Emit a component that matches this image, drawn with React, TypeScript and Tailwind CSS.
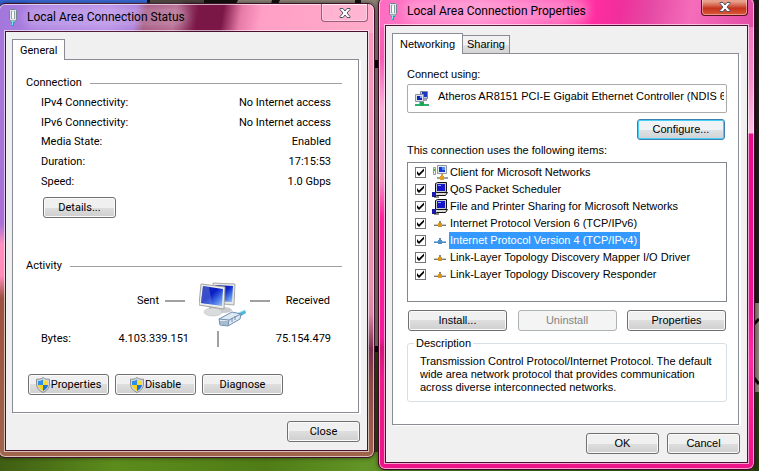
import { useState } from "react";
import type { ReactNode } from "react";

const tahoma = "font-['Roboto',sans-serif] text-[11px]";
const sans = "font-['Liberation_Sans',sans-serif] text-[11px]";

function Wallpaper() {
  return (
    <svg className="absolute inset-0 h-full w-full" viewBox="0 0 759 471" preserveAspectRatio="xMidYMid slice" aria-hidden="true">
      <defs>
        <linearGradient id="grass" x1="0" y1="0" x2="1" y2="0">
          <stop offset="0" stopColor="#3f5e13" />
          <stop offset=".15" stopColor="#5c8c1c" />
          <stop offset=".35" stopColor="#4f7c16" />
          <stop offset=".48" stopColor="#629426" />
          <stop offset="1" stopColor="#2f4a10" />
        </linearGradient>
      </defs>
      <rect width="759" height="471" fill="#8d8376" />
      <rect width="148" height="12" fill="#3565d6" />
      <rect x="148" width="62" height="12" fill="#4d443c" />
      <rect x="147" width="3" height="12" fill="#0a0a10" />
      <path d="M204 0h34l-4 8h-30zM272 0h8l-4 8h-6zM355 0h6v8h-6z" fill="#14100e" />
      <rect x="374" y="60" width="6" height="8" fill="#050505" />
      <rect x="374" y="346" width="6" height="6" fill="#050505" />
      <rect x="374" y="352" width="6" height="119" fill="#33490f" />
      <rect y="452" width="759" height="20" fill="url(#grass)" />
      <rect x="754" width="5" height="303" fill="#1d1917" />
      <path d="M754 324l5-5M754 378l5 6" stroke="#080706" strokeWidth="3" />
      <rect x="754" y="392" width="5" height="80" fill="#26390d" />
    </svg>
  );
}

function PlugIcon() {
  return (
    <svg width="10" height="17" viewBox="0 0 10 17" aria-hidden="true">
      <path d="M2.500 .5h5l1 1v9l-1.500 2h-4l-1.500-2v-9z" fill="#dfe7ea" stroke="#71848e" />
      <path d="M3.500 2v8M6.500 2v8" stroke="#8e9ea7" />
      <path d="M4 3h2v6H4z" fill="#fff" />
      <path d="M3 11h4v2H3z" fill="#9eb0b8" />
      <path d="M3 13h4v1H3zM4 14h2v3H4z" fill="#16a5b8" />
      <path d="M4 12h1v4H4z" fill="#7fe9ee" />
    </svg>
  );
}

function ShieldIcon() {
  return (
    <svg width="14" height="16" viewBox="0 0 14 16" aria-hidden="true">
      <path d="M7 .5L8.500 1.500Q10.500 2.500 13.500 2.200V7Q13.500 12.500 7 15.500Q.5 12.500 .5 7V2.200Q3.500 2.500 5.500 1.500z" fill="#d7dadd" stroke="#8a8f95" />
      <path d="M7 2.500Q4.500 4 2 4V8h5z" fill="#2f8fe6" />
      <path d="M7 2.500Q9.500 4 12 4V8H7z" fill="#f9dc3a" />
      <path d="M2 8h5v6Q2.400 11.500 2 8z" fill="#f7d323" />
      <path d="M12 8H7v6Q11.600 11.500 12 8z" fill="#1f74d4" />
    </svg>
  );
}

function ComputersIcon() {
  return (
    <svg width="48" height="46" viewBox="0 0 48 46" aria-hidden="true">
      <defs>
        <linearGradient id="screen" x1="0" y1="0" x2="1" y2="1">
          <stop offset="0" stopColor="#1526a8" />
          <stop offset=".45" stopColor="#0c1fc4" />
          <stop offset=".65" stopColor="#3560e0" />
          <stop offset="1" stopColor="#9cc8fb" />
        </linearGradient>
      </defs>
      <ellipse cx="25" cy="28" rx="8" ry="3" fill="#c9cbce" />
      <path d="M14 1L36 2L35 23L14 21z" fill="#e6e7e3" stroke="#a9aaa7" />
      <path d="M16 3L34 4L33 20L16 19z" fill="url(#screen)" />
      <path d="M10 24l7 1 1 4h-8z" fill="#b5b8bb" />
      <ellipse cx="14" cy="30" rx="9" ry="4" fill="#d9dbdd" stroke="#b3b6b9" strokeWidth=".5" />
      <path d="M2 2L26 5L25 27L0 23z" fill="#efefeb" stroke="#a3a4a1" />
      <path d="M4 4L24 7L23 24L2 21z" fill="url(#screen)" />
      <path d="M4 4L10 5L13 22L2 21z" fill="#6f86dc" opacity=".45" />
      <path d="M35 33L46 28L47 31L37 37z" fill="#48b9dc" />
      <path d="M37 32L46 28" stroke="#a5e4f4" />
      <path d="M20 37L33 30L42 32L41 37L29 44L21 43z" fill="#dfe9f4" stroke="#6f8dae" />
      <path d="M20 37l10 1 12-6M30 38l-1 6M22 39v3M24 39v4M26 39v4M28 39v4M33 36v4M36 34v4" fill="none" stroke="#6f8dae" />
    </svg>
  );
}

function AdapterIcon() {
  return (
    <svg width="16" height="17" viewBox="0 0 16 17" aria-hidden="true">
      <path d="M6.500 1.500h7v7h-7z" fill="#c8cdda" stroke="#7d8499" />
      <path d="M8 2h5v5H8z" fill="#1b35c4" />
      <path d="M1.500 4.500h8v7h-8z" fill="#dde1ea" stroke="#8d93a5" />
      <path d="M3 6h5v4H3z" fill="#1226b0" />
      <path d="M6 6h2v2H6z" fill="#7fa4f2" />
      <path d="M10 8l3 1v2h-3z" fill="#9ba1b3" />
      <path d="M5 12h5v2H5z" fill="#aab0bd" />
      <path d="M1 14h14v2H1z" fill="#2fae6c" />
      <path d="M6 12h4v4H6z" fill="#19a75c" />
    </svg>
  );
}

type ItemKind = "client" | "service" | "protocol";

function ItemIcon({ kind, active }: { kind: ItemKind; active?: boolean }) {
  if (kind === "client")
    return (
      <svg width="16" height="16" viewBox="0 0 16 16" aria-hidden="true">
        <path d="M1.500 2.500h2v7h-2z" fill="#eee" stroke="#999" />
        <path d="M2 4h1v2H2z" fill="#4db33d" />
        <path d="M5.500 .5h9v8h-9z" fill="#e6eaf0" stroke="#9097a3" />
        <path d="M7 2h6v5H7z" fill="#163ad0" />
        <path d="M10 2h3v3h-3z" fill="#5d8ef2" />
        <path d="M9 9h2v3H9z" fill="#caa03a" />
        <path d="M5 13h11" stroke="#a0a0a0" strokeWidth="2" />
        <path d="M8 11h4v4H8z" fill="#e0a020" />
      </svg>
    );
  if (kind === "service")
    return (
      <svg width="16" height="16" viewBox="0 0 16 16" aria-hidden="true">
        <path d="M3.500 1.500l2-1h9v9l-2 1.500h-9z" fill="#c9c9d6" stroke="#111" />
        <path d="M5 2h8v7H5z" fill="#1616c8" />
        <path d="M6 3h3v1H6z" fill="#8ea2ff" />
        <path d="M2.500 12.500l2-2h11l-2 3h-9z" fill="#dadada" stroke="#111" />
        <path d="M0 10h4v5H0z" fill="#1a1aa8" />
        <path d="M2 15h5" stroke="#111" />
      </svg>
    );
  return (
    <svg width="16" height="16" viewBox="0 0 16 16" aria-hidden="true">
      <path d="M2 9.500h12" stroke={active ? "#4f86bd" : "#777"} />
      <path d="M2 8.500h12" stroke={active ? "#8fc0ea" : "#c8c8c8"} />
      <path d="M7 5h2v2H7z" fill={active ? "#5a8fc0" : "#94886a"} />
      <path d="M6 7h4v4H6z" fill={active ? "#4c8fc4" : "#d9981c"} />
    </svg>
  );
}

function CloseGlyph() {
  return (
    <svg width="12" height="10" viewBox="0 0 12 10" aria-hidden="true">
      <path d="M1 .5h3L6 3L8 .5h3v1L8 5l3 3.500v1H8L6 7L4 9.500H1v-1L4 5L1 1.500z" fill="#fff" stroke="#4f5566" />
    </svg>
  );
}

function Btn({ children, className, disabled, focused }: { children: ReactNode; className: string; disabled?: boolean; focused?: boolean }) {
  const look = disabled
    ? "border-[#adb2b5] bg-[#f4f4f4] text-[#838383]"
    : focused
      ? "border-[#3c7fb1] bg-linear-to-b from-[#f0f3f5] from-50% via-[#dfe2e4] via-50% to-[#cfd3d6] text-black shadow-[inset_0_0_0_1px_#46d0f5]"
      : "border-[#707070] bg-linear-to-b from-[#f0f0f0] from-50% via-[#dedede] via-50% to-[#cfcfcf] text-black shadow-[inset_0_0_0_1px_#fafafa]";
  return (
    <button type="button" disabled={disabled} className={`flex h-[21px] items-center justify-center rounded-[3px] border leading-none whitespace-nowrap ${look} ${className}`}>
      {children}
    </button>
  );
}

function Window({ title, className, glass, titleGlow, closeLook, children }: { title: string; className: string; glass: string; titleGlow: string; closeLook: string; children: ReactNode }) {
  return (
    <section aria-label={title} className={`absolute w-[377px] rounded-[7px] border px-[5px] pb-[5px] shadow-[inset_0_0_0_1px_#ffffff99,0_0_4px_#0008] ${className} ${glass}`}>
      <header className="flex h-[26px] items-start justify-between pl-1">
        <div className="flex h-[26px] items-center gap-[9px]">
          <PlugIcon />
          <h1 className={`rounded-full font-['Roboto',sans-serif] text-[12px] leading-4 whitespace-nowrap text-black ${titleGlow}`}>{title}</h1>
        </div>
        <button type="button" aria-label="Close" className={`mr-px flex h-[18px] w-[47px] items-center justify-center rounded-b-[4px] border border-t-0 ${closeLook}`}>
          <CloseGlyph />
        </button>
      </header>
      <div className="border border-white/60">
        <div className="border border-[#4a1030] bg-[#f0f0f0]">{children}</div>
      </div>
    </section>
  );
}

function Tab({ label, active, onClick }: { label: string; active: boolean; onClick?: () => void }) {
  return (
    <button
      type="button"
      role="tab"
      aria-selected={active}
      onClick={onClick}
      className={
        active
          ? "z-10 -mb-px h-[21px] border border-b-0 border-[#898c95] bg-white px-[7px] leading-none"
          : "h-[18px] border border-b-0 border-l-0 border-[#898c95] bg-linear-to-b from-[#f2f2f2] from-50% via-[#e2e2e2] via-50% to-[#d4d4d4] px-1 leading-none"
      }
    >
      {label}
    </button>
  );
}

function Heading({ children }: { children: ReactNode }) {
  return (
    <h2 className="flex h-4 items-center gap-2 whitespace-nowrap">
      {children}
      <span className="h-px flex-1 bg-[#a0a0a0]" />
    </h2>
  );
}

const status = [
  ["IPv4 Connectivity:", "No Internet access"],
  ["IPv6 Connectivity:", "No Internet access"],
  ["Media State:", "Enabled"],
  ["Duration:", "17:15:53"],
  ["Speed:", "1.0 Gbps"],
];

function StatusWindow() {
  return (
    <Window
      title="Local Area Connection Status"
      className="top-[3px] left-[-2px] border-[#3c1428]"
      glass="[background:linear-gradient(100deg,#a376dc_0,#b48ae6_110px,#a878dc_136px,#a0507c_146px,#b0628a_175px,#7a1747_198px,#7a1747_222px,#e67aa6_240px,#ff9fc6_260px,#ffabc9_370px)_top/100%_29px_no-repeat,linear-gradient(#a878dc_0,#a86fd6_220px,#ff8fc0_240px,#ff8ab8_272px,#9c5040_294px,#a0644c_100%)_left/50%_100%_no-repeat,linear-gradient(#f79cc0_0,#e792b2_280px,#d986a8_310px,#7b2f50_345px,#8a4c44_380px,#a0644c_100%)]"
      titleGlow="bg-white/20 shadow-[0_0_8px_4px_#ffffff33]"
      closeLook="border-[#9c5b78] bg-white/15 shadow-[inset_0_0_0_1px_#ffffff55]"
    >
      <div className={`pt-[7px] pr-[7px] pb-2 pl-[6px] text-black ${tahoma}`}>
        <div role="tablist" className="flex h-5 items-end">
          <Tab label="General" active />
        </div>
        <div role="tabpanel" className="mr-px border border-[#898c95] bg-white px-[13px] pt-[15px] pb-[17px] shadow-[2px_1px_0_#fff]">
          <div className="pr-[3px]">
            <Heading>Connection</Heading>
          </div>
          <dl className="mt-[2px] grid h-[98px] grid-rows-5 pr-[14px] pl-[15px]">
            {status.map(([name, value]) => (
              <div key={name} className="flex items-center justify-between leading-none">
                <dt>{name}</dt>
                <dd>{value}</dd>
              </div>
            ))}
          </dl>
          <Btn className="mt-[6px] ml-[17px] w-[73px]">Details...</Btn>
          <div className="mt-10 pr-[3px]">
            <Heading>Activity</Heading>
          </div>
          <div className="mt-2 flex h-[46px] items-center pr-[15px] pl-[15px]">
            <span className="w-[118px] shrink-0 pb-2 text-right">Sent</span>
            <span className="mb-[9px] ml-[6px] h-[2px] w-5 shrink-0 bg-[#a0a0a0]" />
            <span className="mr-[3px] ml-[14px] shrink-0">
              <ComputersIcon />
            </span>
            <span className="mb-[9px] h-[2px] w-5 shrink-0 bg-[#a0a0a0]" />
            <span className="flex-1 pb-2 text-right">Received</span>
          </div>
          <div className="mt-[3px] flex h-4 items-center pr-[14px] pl-[15px]">
            <span className="w-[60px]">Bytes:</span>
            <span className="w-[88px] text-right">4.103.339.151</span>
            <span className="ml-7 h-4 w-[2px] bg-[#a0a0a0]" />
            <span className="flex-1 text-right">75.154.479</span>
          </div>
          <div className="mt-[27px] flex gap-[6px] pl-[2px]">
            <Btn className="w-[81px] gap-px">
              <ShieldIcon />
              Properties
            </Btn>
            <Btn className="w-[81px] gap-px">
              <ShieldIcon />
              Disable
            </Btn>
            <Btn className="w-[81px]">Diagnose</Btn>
          </div>
        </div>
        <div className="mt-2 flex justify-end">
          <Btn className="w-[73px]">Close</Btn>
        </div>
      </div>
    </Window>
  );
}

const items: { label: string; kind: ItemKind }[] = [
  { label: "Client for Microsoft Networks", kind: "client" },
  { label: "QoS Packet Scheduler", kind: "service" },
  { label: "File and Printer Sharing for Microsoft Networks", kind: "service" },
  { label: "Internet Protocol Version 6 (TCP/IPv6)", kind: "protocol" },
  { label: "Internet Protocol Version 4 (TCP/IPv4)", kind: "protocol" },
  { label: "Link-Layer Topology Discovery Mapper I/O Driver", kind: "protocol" },
  { label: "Link-Layer Topology Discovery Responder", kind: "protocol" },
];

function ItemRow({ label, kind, selected }: { label: string; kind: ItemKind; selected: boolean }) {
  const [checked, setChecked] = useState(true);
  return (
    <li>
      <label className="flex h-[17px] items-center">
        <span className="relative flex">
          <input type="checkbox" checked={checked} onChange={(e) => setChecked(e.target.checked)} className="h-[11px] w-[11px] appearance-none border border-[#70757c] bg-white" />
          {checked && (
            <svg className="pointer-events-none absolute inset-0" width="11" height="11" viewBox="0 0 11 11" aria-hidden="true">
              <path d="M2 4v3l2 2l5-5V1.500L4 6.500z" fill="#000" />
            </svg>
          )}
        </span>
        <span className="mr-px ml-[6px]">
          <ItemIcon kind={kind} active={selected} />
        </span>
        <span className={`h-[17px] pr-[3px] pl-px leading-[17px] whitespace-nowrap ${selected ? "bg-[#3399ff] text-white" : ""}`}>{label}</span>
      </label>
    </li>
  );
}

function PropertiesWindow() {
  return (
    <Window
      title="Local Area Connection Properties"
      className="top-[-3px] left-[378px] border-[#3c0824]"
      glass="[background:linear-gradient(100deg,#ff6cc0_0,#ff86cc_100px,#ff5cb8_180px,#ff2da0_215px,#f02f9c_240px,#e54aa4_270px,#f56dba_310px,#e04aa4_377px)_top/100%_29px_no-repeat,linear-gradient(#ff6cc0_0,#f45cb4_60px,#fbb0da_110px,#f59ccc_180px,#ff1f9c_220px,#f5189a_340px,#d01478_350px,#f01a8c_380px,#ec1488_100%)_left/50%_100%_no-repeat,linear-gradient(#f06cba_0,#f58cc8_80px,#fbc0e0_135px,#e60f8c_136px,#ec1490_310px,#ff2ba4_360px,#ec1488_100%)]"
      titleGlow="bg-white/20 shadow-[0_0_8px_4px_#ffffff33]"
      closeLook="border-[#5c1020] bg-linear-to-b from-[#e8a08c] from-20% via-[#c4321c] via-60% to-[#dc5a3c] shadow-[inset_0_0_0_1px_#ffffff66]"
    >
      <div className={`pt-[7px] pr-[7px] pb-2 pl-[6px] text-black ${sans}`}>
        <div role="tablist" className="flex h-5 items-end">
          <Tab label="Networking" active />
          <Tab label="Sharing" active={false} />
        </div>
        <div role="tabpanel" className="mr-px border border-[#898c95] bg-white pt-3 pr-[11px] pb-[22px] pl-[14px] shadow-[2px_1px_0_#fff]">
          <label htmlFor="adapter" className="block h-4 leading-4">
            Connect using:
          </label>
          <div className="mt-[2px] flex h-[29px] items-center rounded-[2px] border border-[#ababab] pr-[2px] pl-[6px]">
            <AdapterIcon />
            <input id="adapter" readOnly value="Atheros AR8151 PCI-E Gigabit Ethernet Controller (NDIS 6" className="mb-[5px] ml-2 h-4 min-w-0 flex-1 bg-transparent outline-none" />
          </div>
          <div className="mt-[6px] flex justify-end pr-[2px]">
            <Btn focused className="w-[88px]">
              Configure...
            </Btn>
          </div>
          <p className="mt-[2px] h-4 leading-4">This connection uses the following items:</p>
          <ul className="mt-1 h-[140px] border border-[#828790] py-px pl-[7px]">
            {items.map((item, i) => (
              <ItemRow key={item.label} {...item} selected={i === 4} />
            ))}
          </ul>
          <div className="mt-2 flex justify-between px-px">
            <Btn className="w-[99px]">Install...</Btn>
            <Btn disabled className="w-[99px]">
              Uninstall
            </Btn>
            <Btn className="w-[99px]">Properties</Btn>
          </div>
          <fieldset className="mt-1 h-[67px] min-w-0 rounded-[3px] border border-[#d5dfe5] px-3">
            <legend className="-ml-[6px] h-4 px-[2px] leading-4">Description</legend>
            <p className="pt-1 leading-[13px] whitespace-nowrap">
              Transmission Control Protocol/Internet Protocol. The default
              <br />
              wide area network protocol that provides communication
              <br />
              across diverse interconnected networks.
            </p>
          </fieldset>
        </div>
        <div className="mt-2 flex justify-end gap-2">
          <Btn className="w-[73px]">OK</Btn>
          <Btn className="w-[73px]">Cancel</Btn>
        </div>
      </div>
    </Window>
  );
}

export default function App() {
  return (
    <main className="relative h-screen overflow-hidden bg-[#8d8376]">
      <Wallpaper />
      <StatusWindow />
      <PropertiesWindow />
    </main>
  );
}
